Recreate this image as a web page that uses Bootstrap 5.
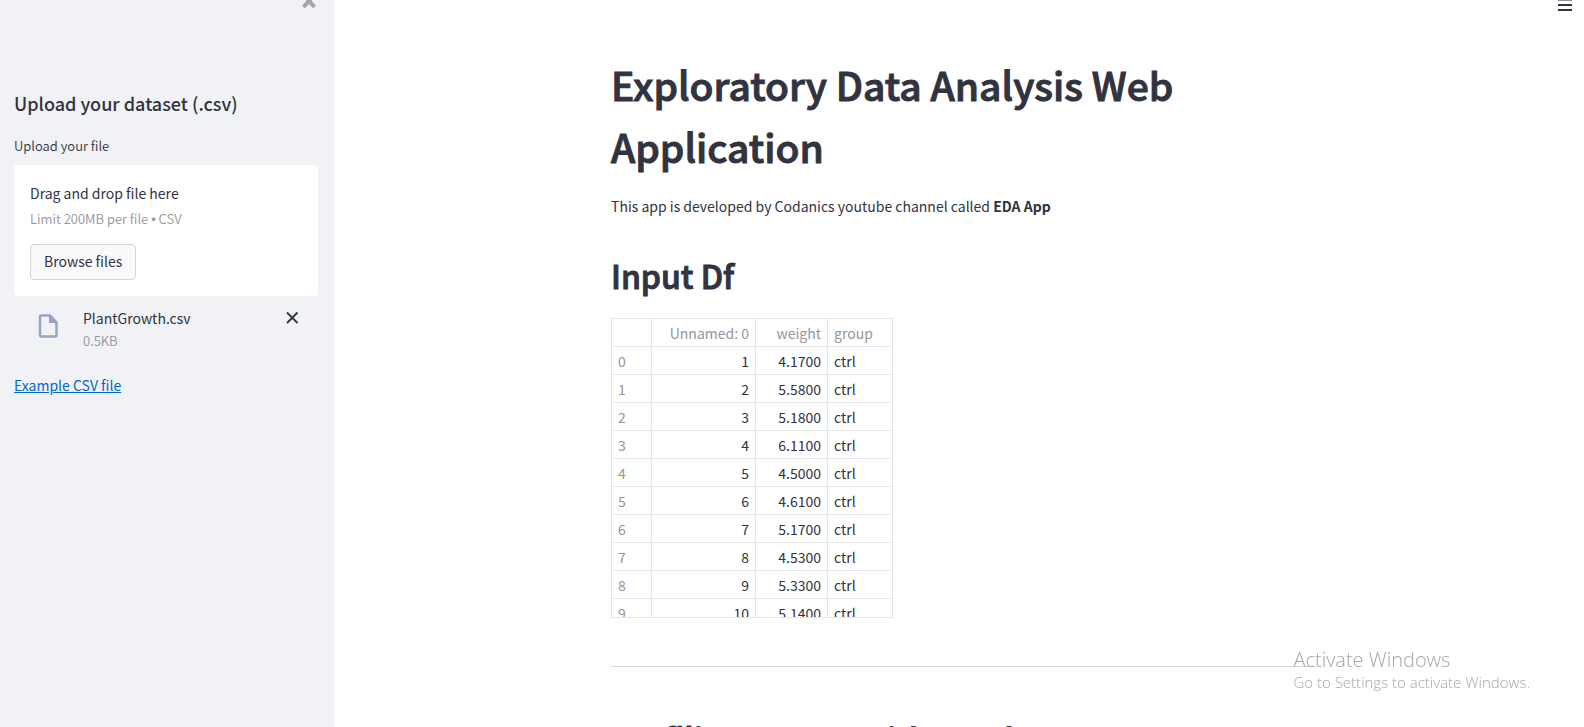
<!DOCTYPE html>
<html lang="en">
<head>
<meta charset="utf-8">
<meta name="viewport" content="width=device-width, initial-scale=1">
<title>Exploratory Data Analysis Web Application</title>
<link href="https://cdn.jsdelivr.net/npm/bootstrap@5.3.0/dist/css/bootstrap.min.css" rel="stylesheet">
<style>
  :root { --ink: #31333f; --soft: #94959c; --line: #e6e6e8; }
  body { font-family: "Source Sans Pro", "Noto Sans CJK SC", sans-serif; font-size: 14px; line-height: 26px; color: var(--ink); }
  .app { height: 100vh; }
  .side { width: 334px; background: #f0f2f6; padding: 0 16px 0 14px; }
  .side-top { height: 88px; padding-right: 2px; }
  .icon-btn { border: 0; background: none; padding: 0; line-height: 0; color: var(--ink); }
  .side-top .icon-btn { color: #a3a5aa; }
  .side-title { font-size: 18px; line-height: 30px; font-weight: 500; margin-bottom: 18px; }
  .tiny { font-size: 13px; line-height: 20px; font-weight: 350; }
  .soft { color: var(--soft); }
  .dot { font-family: "Liberation Sans", sans-serif; }
  .upload-label { margin-bottom: 9px; }
  .drop { border-radius: 4px; padding: 15px 16px 16px; }
  .limit { padding-top: 3px; }
  .browse { font-size: 14px; line-height: 26px; padding: 3px 13px 5px; margin-top: 14px; color: var(--ink); background: #f9f9fb; border: 1px solid #d3d4d8; border-radius: 4px; }
  .file-row { padding: 9px 16px 0 23px; gap: 22px; }
  .remove { padding-top: 6px; }
  .example { padding-top: 21px; }
  .link-csv { color: #0068c9; }
  .main { padding: 0 0 0 8px; }
  .menu { top: 0; right: 12px; }
  .page-col { max-width: 704px; padding-top: 53px; }
  h1 { font-size: 39px; line-height: 62px; font-weight: 500; margin-bottom: 16px; -webkit-text-stroke: 1px; }
  .section-title { font-size: 32px; line-height: 44px; font-weight: 500; margin: 0; -webkit-text-stroke: 1px; }
  .intro { margin-bottom: 34px; }
  .frame { width: 282px; height: 300px; border: 1px solid var(--line); margin-top: 21px; }
  .grid { width: 280px; table-layout: fixed; border-collapse: separate; border-spacing: 0; }
  .grid th, .grid td { height: 28px; padding: 1px 6px 0; line-height: 26px; font-weight: 400; border-right: 1px solid var(--line); border-bottom: 1px solid var(--line); }
  .grid th:last-child, .grid td:last-child { border-right: 0; }
  .grid th { color: var(--soft); }
  .rule { height: 1px; border: 0; opacity: 1; background: #d6d6d9; margin: 48px 0 49px; }
  .notice { right: 54px; bottom: 35px; font-family: "Segoe UI", "Open Sans", sans-serif; font-weight: 300; color: #a6a6a6; font-size: 15px; line-height: 20px; pointer-events: none; }
  .notice strong { display: block; font-size: 20px; line-height: 25px; font-weight: 300; }
</style>
</head>
<body>
<div class="app d-flex overflow-hidden">
  <aside class="side flex-shrink-0">
    <div class="side-top d-flex justify-content-end align-items-start">
      <button class="icon-btn" type="button" aria-label="Close sidebar">
        <svg width="14" height="8" viewBox="0 0 14 8" fill="none" stroke="currentColor" stroke-width="4"><path d="M1.500 7L7 1L12.500 7M3 -4L7 1L11 -4"/></svg>
      </button>
    </div>
    <h2 class="side-title">Upload your dataset (.csv)</h2>
    <div class="tiny upload-label"><label for="csv">Upload your file</label></div>
    <div class="drop bg-white">
      <div>Drag and drop file here</div>
      <div class="tiny soft limit">Limit 200MB per file <span class="dot">•</span> CSV</div>
      <input type="file" id="csv" accept=".csv" hidden>
      <button class="browse d-block" type="button">Browse files</button>
    </div>
    <div class="file-row d-flex align-items-start">
      <svg class="mt-2 flex-shrink-0" width="24" height="28" viewBox="0 0 24 28"><path d="M4.500 2.500H13L19.500 9.500V22Q19.500 23.500 18 23.500H4.500Q3 23.500 3 22V4Q3 2.500 4.500 2.500" fill="none" stroke="#96a5c6" stroke-width="2.500"/><path d="M12 2.500V10H20Z" fill="#96a5c6"/></svg>
      <div class="flex-grow-1">
        <div>PlantGrowth.csv</div>
        <div class="tiny soft">0.5KB</div>
      </div>
      <button class="icon-btn remove" type="button" aria-label="Remove file">
        <svg width="20" height="14" viewBox="0 0 20 14" fill="none" stroke="currentColor" stroke-width="1.800"><path d="M5 1.500L15.500 12M15.500 1.500L5 12"/></svg>
      </button>
    </div>
    <p class="mb-0 example"><a class="link-csv" href="#csv-example">Example CSV file</a></p>
  </aside>

  <main class="main position-relative flex-grow-1">
    <button class="icon-btn menu position-absolute" type="button" aria-label="Menu">
      <svg class="d-block" width="14" height="12" viewBox="0 0 14 12"><path d="M0 0H14V1H0Z" fill="#8f9097"/><path d="M0 4H14V6H0ZM0 9H14V11H0Z" fill="#31333f"/></svg>
    </button>
    <div class="page-col mx-auto">
      <h1>Exploratory Data Analysis Web Application</h1>
      <p class="intro">This app is developed by Codanics youtube channel called <b>EDA App</b></p>
      <h2 class="section-title">Input Df</h2>
      <div class="frame overflow-hidden">
        <table class="grid">
          <colgroup><col style="width:40px"><col style="width:104px"><col style="width:72px"><col style="width:64px"></colgroup>
          <thead><tr><th></th><th class="text-end">Unnamed: 0</th><th class="text-end">weight</th><th>group</th></tr></thead>
          <tbody>
            <tr><th>0</th><td class="text-end">1</td><td class="text-end">4.1700</td><td>ctrl</td></tr>
            <tr><th>1</th><td class="text-end">2</td><td class="text-end">5.5800</td><td>ctrl</td></tr>
            <tr><th>2</th><td class="text-end">3</td><td class="text-end">5.1800</td><td>ctrl</td></tr>
            <tr><th>3</th><td class="text-end">4</td><td class="text-end">6.1100</td><td>ctrl</td></tr>
            <tr><th>4</th><td class="text-end">5</td><td class="text-end">4.5000</td><td>ctrl</td></tr>
            <tr><th>5</th><td class="text-end">6</td><td class="text-end">4.6100</td><td>ctrl</td></tr>
            <tr><th>6</th><td class="text-end">7</td><td class="text-end">5.1700</td><td>ctrl</td></tr>
            <tr><th>7</th><td class="text-end">8</td><td class="text-end">4.5300</td><td>ctrl</td></tr>
            <tr><th>8</th><td class="text-end">9</td><td class="text-end">5.3300</td><td>ctrl</td></tr>
            <tr><th>9</th><td class="text-end">10</td><td class="text-end">5.1400</td><td>ctrl</td></tr>
          </tbody>
        </table>
      </div>
      <hr class="rule">
      <h2 class="section-title">Profiling Report with Pandas</h2>
    </div>
  </main>
</div>
<div class="notice position-fixed"><strong>Activate Windows</strong>Go to Settings to activate Windows.</div>
<script src="https://cdn.jsdelivr.net/npm/bootstrap@5.3.0/dist/js/bootstrap.bundle.min.js"></script>
</body>
</html>
